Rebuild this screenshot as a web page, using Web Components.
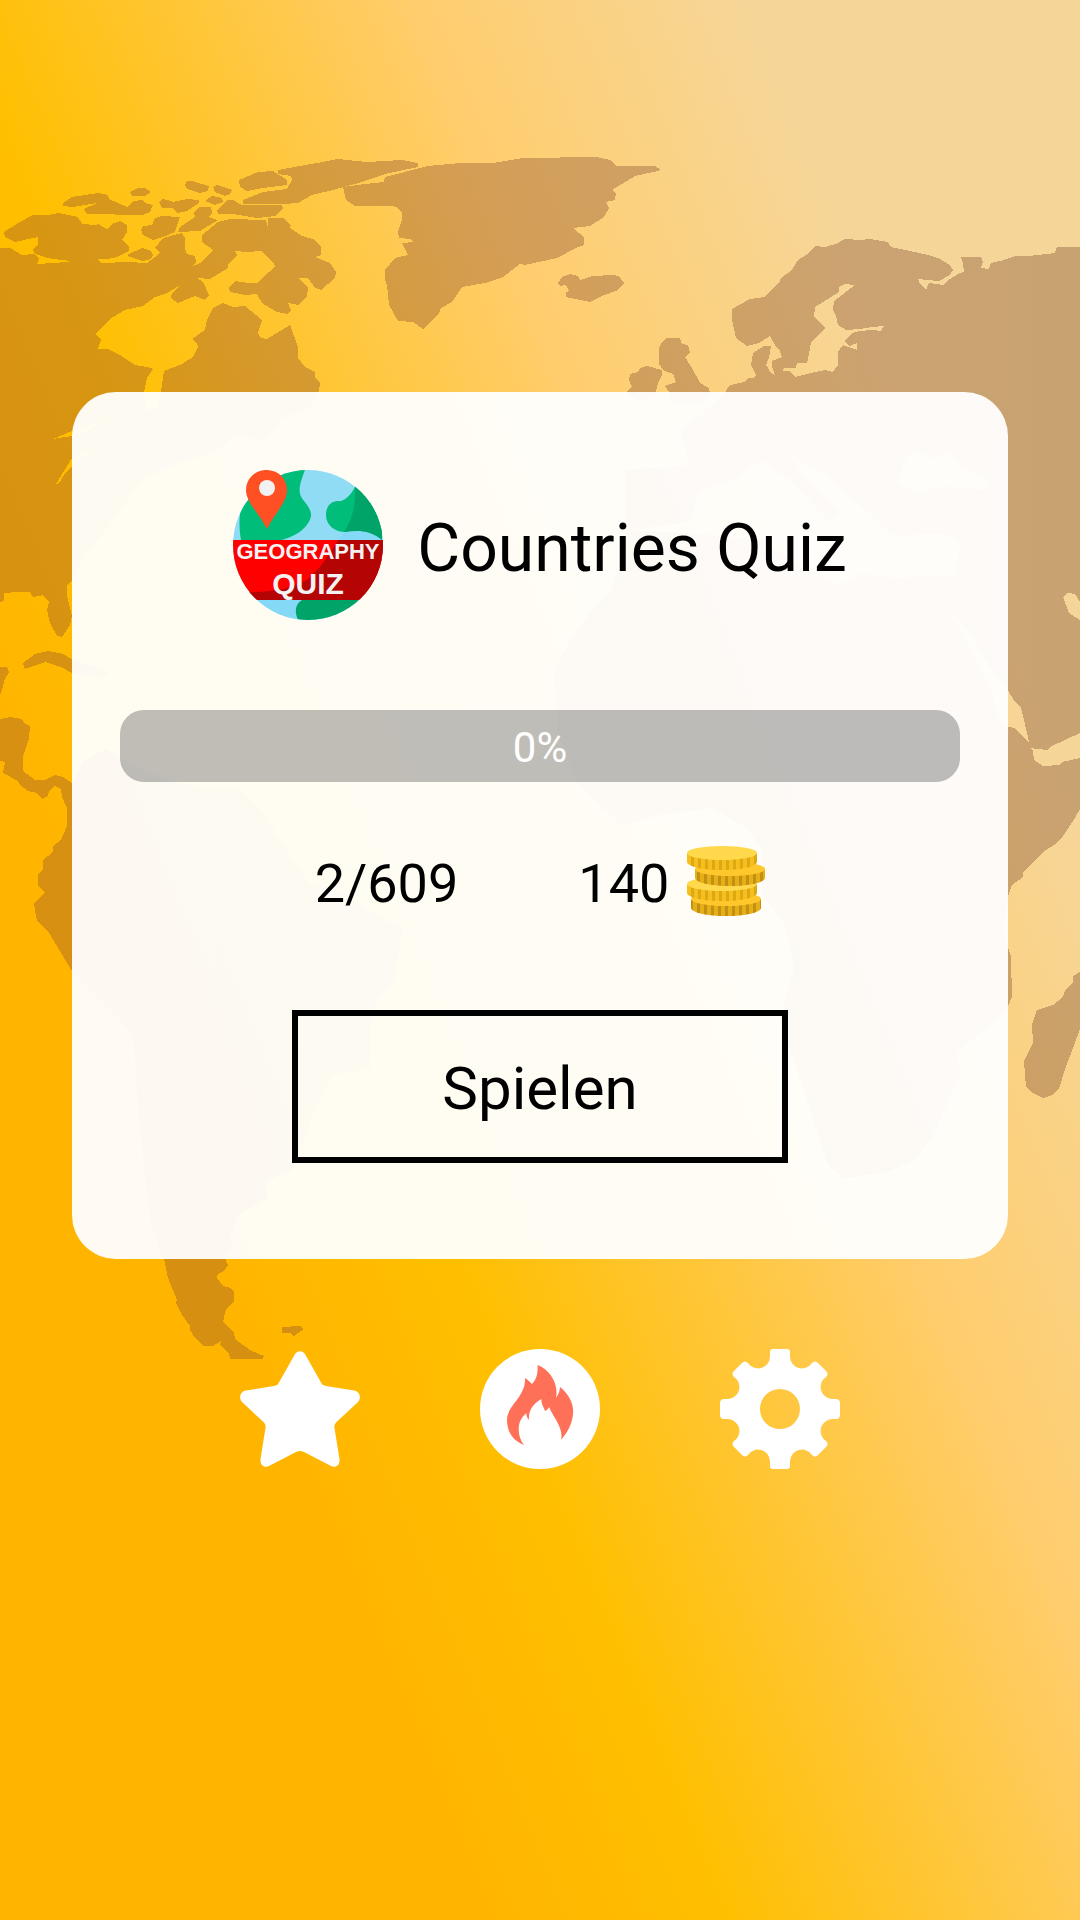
<!DOCTYPE html>
<html lang="de">
<head>
<meta charset="utf-8">
<meta name="viewport" content="width=device-width, initial-scale=1">
<title>Countries Quiz</title>
<style>
  body {
    margin: 0;
    font-family: Roboto, sans-serif;
    color: #000;
    background: #ffb500;
  }
</style>
</head>
<body>

<quiz-screen>
  <world-map slot="background"></world-map>
  <quiz-card>
    <quiz-logo slot="logo"></quiz-logo>
    <span slot="title">Countries Quiz</span>
    <quiz-progress slot="progress" data-value="0"></quiz-progress>
    <span slot="stats">2/609</span>
    <coin-balance slot="coins">140</coin-balance>
    <play-button slot="action">Spielen</play-button>
  </quiz-card>
  <icon-button slot="actions" data-icon="star" data-label="Bewerten"></icon-button>
  <icon-button slot="actions" data-icon="fire" data-label="Beliebt"></icon-button>
  <icon-button slot="actions" data-icon="gear" data-label="Einstellungen"></icon-button>
</quiz-screen>

<script>
class BaseElement extends HTMLElement {
  constructor() {
    super();
    this.dom = this.attachShadow({ mode: "open" });
  }

  connectedCallback() {
    const template = document.createElement("template");
    template.innerHTML = this.markup();
    this.dom.replaceChildren(document.importNode(template.content, true));
  }
}

/* Page frame: gradient, background slot, card, row of actions */
class QuizScreen extends BaseElement {
  markup() {
    return `
      <style>
        :host {
          display: block;
          position: relative;
          min-height: 100vh;
          overflow: hidden;
          background: linear-gradient(68deg, #ffb500 0%, #ffb500 26%, #ffbf00 39%, #ffcd6d 64%, #f6d698 82%, #f6d698 100%);
        }
        main {
          position: relative;
          padding: 392px 72px 72px;
        }
        nav {
          display: flex;
          justify-content: center;
          gap: 120px;
          margin-top: 90px;
        }
      </style>
      <slot name="background"></slot>
      <main>
        <slot></slot>
        <nav><slot name="actions"></slot></nav>
      </main>
    `;
  }
}

class WorldMap extends BaseElement {
  markup() {
    return `
      <style>
        :host {
          display: block;
          position: absolute;
          inset: 0;
        }
        svg {
          display: block;
          width: 100%;
          height: 100%;
          fill: url(#land);
          fill-opacity: 0.37;
          fill-rule: evenodd;
        }
      </style>
      <svg viewBox="0 0 1080 1920" preserveAspectRatio="xMidYMin slice" shape-rendering="crispEdges" aria-hidden="true">
        <defs>
          <linearGradient id="land" gradientUnits="userSpaceOnUse" x1="0" y1="0" x2="1080" y2="0">
            <stop offset="0" stop-color="#94502f"/>
            <stop offset="1" stop-color="#7c4a31"/>
          </linearGradient>
        </defs>
        <!-- North America -->
        <path d="M0 248L10 248 22 255 34 254 39 259 37 264 68 262 70 261 47 258 35 254 33 250 38 244 38 237 15 242 5 237 4 232 18 223 33 215 48 215 58 213 78 217 82 224 95 225 98 224 107 229 114 223 120 221 127 225 127 232 122 240 129 246 129 251 117 257 107 259 97 259 102 263 127 262 147 263 155 257 160 253 155 248 163 238 182 233 185 238 185 248 187 254 195 256 196 262 191 267 200 263 213 250 202 242 202 235 218 222 230 219 266 220 268 228 268 218 283 218 291 225 290 228 302 236 313 239 321 247 321 255 315 257 330 263 336 272 335 278 321 290 315 288 308 278 298 278 308 287 307 297 298 305 288 303 291 310 288 314 277 312 262 303 257 294 245 295 230 292 229 287 235 281 248 283 258 283 262 278 275 267 274 263 267 257 261 251 247 252 235 251 237 255 228 265 228 268 210 279 197 278 203 282 209 295 205 300 195 296 178 303 171 298 172 293 179 286 167 293 155 297 143 306 125 310 110 319 95 334 101 340 98 349 108 349 120 355 135 365 147 367 153 369 147 378 144 392 146 410 158 408 161 392 164 371 182 364 193 357 198 347 197 343 192 339 205 330 207 320 213 308 223 303 233 307 245 306 262 320 258 333 261 338 267 339 290 325 298 347 298 358 305 367 315 372 315 377 320 383 319 392 312 405 280 420 265 440 235 436 215 452 180 462 140 482 110 525 85 555 72 581 67 585 67 596 72 616 70 625 62 637 57 636 50 623 47 610 49 602 43 595 33 597 30 592 17 592 4 593 4 601 0 602ZM53 439L72 431 110 420 72 436ZM56 484L72 458 90 450 66 472 59 483Z"/>
        <!-- Arctic islands -->
        <path d="M63 203L72 197 98 193 108 195 109 199 127 207 133 201 143 200 145 203 153 205 150 212 143 215 87 214 84 209 97 203 73 207 63 206Z"/>
        <path d="M130 192L138 188 145 188 151 192 145 196 132 196ZM159 202L162 199 168 200 173 202 187 199 199 200 199 203 187 211 178 213 172 208 162 208ZM185 185L187 181 192 181 209 186 208 191 200 193 187 189ZM213 187L217 185 232 190 230 194 225 196 215 192ZM205 201L212 196 222 198 223 202 215 205ZM239 180L258 172 273 171 287 180 287 185 263 188 247 191 240 187Z"/>
        <path d="M278 170L300 166 317 163 338 159 367 162 402 160 418 163 418 167 385 174 355 184 333 190 312 195 298 203 283 204 243 204 243 200 263 192 287 189 292 180 291 176 278 174Z"/>
        <path d="M217 210L227 200 233 200 242 205 282 205 283 208 275 216 257 218 233 214 218 214ZM141 230L143 226 152 225 155 218 162 216 180 217 175 232 163 237 153 240 143 235ZM194 212L200 207 211 207 212 213 208 217 218 220 200 231 178 232 180 227 195 217ZM127 255L142 248 151 251 153 255 151 259 143 261 130 257Z"/>
        <!-- Greenland and Iceland -->
        <path d="M343 187L365 184 384 182 385 177 428 166 460 163 493 163 523 158 597 157 610 160 616 166 655 166 660 169 658 171 635 176 612 190 616 193 615 200 606 202 609 208 604 217 590 226 573 228 584 237 584 245 576 248 557 258 525 265 520 264 503 277 485 283 462 287 452 302 441 308 439 313 423 329 413 322 398 321 389 305 387 285 385 280 385 270 395 258 408 255 402 243 413 242 410 239 399 238 398 232 402 220 402 213 397 207 390 206 355 206 346 200Z"/>
        <path d="M558 283L562 277 570 274 578 276 580 280 592 276 613 275 619 276 624 283 618 290 602 296 590 302 566 297 566 292 569 291 566 285 560 286Z"/>
        <!-- Caribbean and South America -->
        <path d="M23 663L35 654 48 651 63 654 72 659 110 672 102 678 72 673 63 668 45 662 25 669ZM0 667L7 667 9 672 4 681 3 687 0 696Z"/>
        <path d="M0 719L10 717 22 719 24 723 30 726 29 739 23 757 23 771 35 780 45 780 55 775 63 777 72 783 84 760 106 749 140 768 178 783 214 788 240 790 262 811 280 839 310 884 340 890 370 912 403 929 394 979 372 1010 370 1069 334 1075 316 1108 292 1170 265 1181 268 1198 238 1215 230 1238 232 1248 225 1258 228 1265 225 1270 217 1275 217 1278 223 1286 231 1288 234 1292 234 1301 226 1309 223 1322 234 1333 235 1339 250 1350 264 1356 263 1359 230 1359 229 1353 220 1345 221 1341 213 1346 203 1346 195 1338 190 1330 190 1326 182 1315 176 1303 177 1300 168 1278 164 1259 152 1230 148 1204 139 1119 133 1035 110 1010 72 971 48 931 37 921 34 904 45 892 38 886 38 874 43 869 43 860 53 852 53 846 61 840 67 826 67 808 62 797 61 789 55 786 49 791 48 796 42 799 37 793 28 791 20 785 18 781 3 773 5 762 0 761Z"/>
        <path d="M282 1327L300 1326 304 1329 298 1333 294 1336 290 1333 282 1333Z"/>
        <!-- British Isles -->
        <path d="M659 348L662 342 666 338 680 338 682 344 688 345 690 353 685 357 692 368 700 383 709 388 710 394 700 403 672 405 669 392 665 386 676 382 673 374 664 371 659 364ZM626 392L632 387 629 380 630 374 638 372 640 368 647 366 662 370 662 375 658 383 655 395 640 401Z"/>
        <!-- Eurasia and Africa -->
        <path d="M726 392L727 388 731 385 744 382 748 378 753 378 756 375 751 365 753 353 764 346 771 346 769 358 766 365 771 373 775 375 772 367 772 361 782 357 780 351 776 347 770 336 759 343 747 346 736 338 732 320 732 309 750 299 764 297 779 283 781 278 792 270 798 260 806 255 815 246 825 247 836 244 845 239 860 240 870 239 888 242 891 247 910 251 928 255 938 258 950 265 953 270 950 275 939 281 927 280 918 279 920 284 926 290 929 283 944 285 948 280 960 273 964 272 963 263 961 257 981 257 983 262 981 268 989 269 991 263 1004 260 1015 256 1029 256 1055 253 1057 247 1080 247 1080 809 1075 818 1063 836 1057 843 1043 852 1023 872 1023 877 1012 885 1008 896 1003 930 1011 957 1012 997 1005 1013 957 1052 960 1075 933 1136 915 1160 885 1173 843 1178 828 1165 813 1119 780 1018 794 968 785 925 762 895 762 850 747 828 711 808 660 815 622 825 605 810 577 783 558 735 554 670 572 637 589 614 611 590 620 565 625 540 625 470 690 465 680 430 700 416ZM855 285L845 284 839 287 839 292 815 307 814 317 825 328 811 342 809 354 807 363 797 363 796 368 784 368 783 371 789 371 795 377 815 372 825 370 833 372 838 365 838 352 843 345 857 350 857 343 850 346 844 341 852 333 860 331 872 330 881 331 884 326 872 327 860 329 846 330 838 325 836 316 833 310 834 301ZM630 530L690 522 700 490 735 480 760 460 790 480 830 522 838 512 800 470 790 455 825 475 865 510 890 535 945 534 960 545 955 575 900 578 860 574 840 585 800 565 760 540 700 534ZM897 484L905 460 915 449 930 458 950 452 960 468 990 480 985 490 945 486 915 492ZM1063 597L1068 593 1075 594 1080 602 1080 620 1069 613ZM951 612L969 632 985 660 1008 690 1014 701 1021 708 1024 720 1029 742 1025 739 1015 728 1008 727 999 717 990 687 970 650ZM1030 748L1047 750 1052 746 1065 740 1080 733 1080 758 1062 762 1060 765 1043 766 1034 760 1033 751Z"/>
        <path d="M1080 972L1073 976 1073 983 1065 990 1063 997 1053 1005 1037 1010 1032 1024 1033 1043 1024 1061 1026 1087 1033 1093 1043 1098 1052 1095 1059 1089 1065 1069 1073 1048 1080 1029Z"/>
      </svg>
    `;
  }
}

class QuizCard extends BaseElement {
  markup() {
    return `
      <style>
        :host {
          display: flex;
          flex-direction: column;
          align-items: center;
          padding: 78px 48px 96px;
          border-radius: 44px;
          background: rgba(255, 255, 255, 0.95);
        }
        header {
          display: flex;
          align-items: center;
          gap: 34px;
        }
        h1 {
          margin: 0;
          padding-top: 8px;
          font-size: 66px;
          line-height: 78px;
          font-weight: 400;
        }
        .progress {
          align-self: stretch;
          margin: 90px 0 60px;
        }
        .stats {
          display: flex;
          align-items: center;
          gap: 120px;
          height: 78px;
          margin-bottom: 90px;
          font-size: 54px;
        }
        .level { padding-top: 4px; }
      </style>
      <header>
        <slot name="logo"></slot>
        <h1><slot name="title"></slot></h1>
      </header>
      <div class="progress"><slot name="progress"></slot></div>
      <div class="stats">
        <div class="level"><slot name="stats"></slot></div>
        <slot name="coins"></slot>
      </div>
      <slot name="action"></slot>
    `;
  }
}

class QuizLogo extends BaseElement {
  markup() {
    return `
      <style>
        :host { display: block; }
        svg { display: block; width: 150px; height: 150px; }
        text {
          font-family: "Liberation Sans", Arial, sans-serif;
          font-weight: 700;
          fill: #f2f2f2;
          text-anchor: middle;
        }
      </style>
      <svg viewBox="0 0 150 150" role="img" aria-label="Geography Quiz">
        <defs>
          <clipPath id="globe"><circle cx="75" cy="75" r="75"/></clipPath>
          <clipPath id="shade"><path d="M122 17C123 36 119 54 105 70C96 86 86 100 74 110C58 119 40 122 15 122V150H150V0Z"/></clipPath>
        </defs>
        <g clip-path="url(#globe)">
          <path fill="#90dcf5" d="M0 0H150V150H0Z"/>
          <path fill="#00bd7a" d="M72 0C65 18 65 24 71 31C80 42 80 47 73 56C67 63 59 67 49 70H8C6 60 6 45 8 40L20 0Z"/>
          <path fill="#00bd7a" d="M122 17C116 28 110 32 104 31C97 32 93 37 93 45C93 56 103 62 112 62C124 60 138 60 149 70L150 17Z"/>
          <path fill="#f00" d="M0 70H150V130H0Z"/>
          <path fill="#84d9f6" d="M0 130H150V150H0Z"/>
          <g clip-path="url(#shade)">
            <path fill="#84d9f6" d="M105 62L112 62C124 60 138 60 149 70H105Z"/>
            <path fill="#00a468" d="M122 17C116 28 110 32 104 31C97 32 93 37 93 45C93 56 103 62 112 62C124 60 138 60 149 70L150 17Z"/>
            <path fill="#b40404" d="M0 70H150V130H0Z"/>
            <path fill="#00a468" d="M69 130C61 135 62 143 65 150H150V130Z"/>
          </g>
        </g>
        <path fill="#ff5023" d="M34 0A20 20 0 0 1 54 20C54 33 41 44 34 59C27 44 13 33 13 20A20 20 0 0 1 34 0Z"/>
        <circle cx="34" cy="18" r="8" fill="#f2f2f2"/>
        <text x="75" y="89" font-size="22">GEOGRAPHY</text>
        <text x="75" y="124" font-size="30">QUIZ</text>
      </svg>
    `;
  }
}

class QuizProgress extends BaseElement {
  markup() {
    const value = Number(this.getAttribute("data-value")) || 0;
    return `
      <style>
        :host { display: block; }
        .bar {
          display: grid;
          height: 72px;
          border-radius: 24px;
          overflow: hidden;
          background: rgba(0, 0, 0, 0.25);
          color: #fff;
          font-size: 42px;
          line-height: 76px;
          text-align: center;
        }
        .bar > * { grid-area: 1 / 1; }
        .fill { width: ${value}%; background: #ffb500; }
      </style>
      <div class="bar" role="progressbar" aria-valuemin="0" aria-valuemax="100" aria-valuenow="${value}">
        <div class="fill"></div>
        <span>${value}%</span>
      </div>
    `;
  }
}

class CoinBalance extends BaseElement {
  // one coin: striped rim below a flat ellipse
  coin(x, y, name, top) {
    const rim = `M${x} ${y}V${y + 9}A35 8 0 0 0 ${x + 70} ${y + 9}V${y}Z`;
    return `
      <path d="${rim}" fill="url(#${name})"/>
      <ellipse cx="${x + 35}" cy="${y}" rx="35" ry="7" fill="${top}"/>
    `;
  }

  markup() {
    return `
      <style>
        :host {
          display: flex;
          align-items: center;
          gap: 18px;
        }
        span { padding-top: 4px; }
        svg { display: block; width: 78px; height: 70px; }
      </style>
      <span><slot></slot></span>
      <svg viewBox="0 0 78 70" aria-hidden="true">
        <defs>
          <pattern id="light" width="7" height="70" patternUnits="userSpaceOnUse">
            <path fill="#f5bf1c" d="M0 0H7V70H0Z"/><path fill="#dda716" d="M4 0H7V70H4Z"/>
          </pattern>
          <pattern id="dark" width="7" height="70" patternUnits="userSpaceOnUse">
            <path fill="#e6af18" d="M0 0H7V70H0Z"/><path fill="#c29112" d="M3 0H6V70H3Z"/>
          </pattern>
        </defs>
        ${this.coin(4, 53, "dark", "#ffc72c")}
        ${this.coin(0, 38, "light", "#ffd84c")}
        ${this.coin(8, 23, "dark", "#ffc72c")}
        ${this.coin(0, 7, "light", "#ffd84c")}
      </svg>
    `;
  }
}

class PlayButton extends BaseElement {
  markup() {
    return `
      <style>
        :host { display: block; }
        button {
          display: block;
          min-width: 496px;
          padding: 38px 48px 34px;
          border: 6px solid #000;
          background: transparent;
          color: inherit;
          font: inherit;
          font-size: 60px;
          line-height: 69px;
          cursor: pointer;
        }
      </style>
      <button type="button"><slot></slot></button>
    `;
  }
}

const icons = {
  star: `<path d="M54.500 6C57 1 63 1 65.500 6L80.500 32.500Q82 36.500 86 37L114 41.500C120 42.500 121.500 49 118 53L96 73.500Q94 76 94.500 79L99.500 110C100 116 96 119.500 91 117L64 103Q60 101 56 103L29 117C24 119.500 20 116 20.500 110L25.500 79Q26 76 24 73.500L2 53C-1.500 49 0 42.500 6 41.500L34 37Q38 36.500 39.500 32.500Z"/>`,
  fire: `
    <circle cx="60" cy="60" r="60"/>
    <path fill="#ff7058" d="M57.600 16C69 20 79 34 76 49C78 46 80 42 80 38C90 46 94 56 93 65C92 76 87 84 81 91C84 79 73 68 69 58C68 60 67 61 65 62C64 58 61 56 61.500 50C54 54 48 61 49 71C47 69 46 66 46.500 64C36 72 37 87 44 96C32 91 27 82 27 71C27 56 46 48 45 29C48 31 50 33 52 35C57 30 58 23 57.600 16Z"/>
  `,
  gear: `<path fill-rule="evenodd" d="M53 0H67Q70 0 70 3V8A12 12 0 0 0 92 14Q95 11 98 14L106 22Q109 25 106 28A12 12 0 0 0 112 50H117Q120 51 120 54V66Q120 69 117 70H112A12 12 0 0 0 106 92Q109 95 106 98L98 106Q95 109 92 106A12 12 0 0 0 70 112V117Q70 120 67 120H53Q50 120 50 117V112A12 12 0 0 0 28 106Q25 109 22 106L14 98Q11 95 14 92A12 12 0 0 0 8 70H3Q0 69 0 66V54Q0 51 3 50H8A12 12 0 0 0 14 28Q11 25 14 22L22 14Q25 11 28 14A12 12 0 0 0 50 8V3Q50 0 53 0ZM60 40A20 20 0 0 0 60 80A20 20 0 0 0 60 40Z"/>`
};

class IconButton extends BaseElement {
  markup() {
    return `
      <style>
        :host { display: block; }
        button {
          display: block;
          padding: 0;
          border: 0;
          background: transparent;
          cursor: pointer;
        }
        svg { display: block; width: 120px; height: 120px; fill: #fff; }
      </style>
      <button type="button" aria-label="${this.getAttribute("data-label")}">
        <svg viewBox="0 0 120 120" aria-hidden="true">${icons[this.getAttribute("data-icon")]}</svg>
      </button>
    `;
  }
}

customElements.define("quiz-screen", QuizScreen);
customElements.define("world-map", WorldMap);
customElements.define("quiz-card", QuizCard);
customElements.define("quiz-logo", QuizLogo);
customElements.define("quiz-progress", QuizProgress);
customElements.define("coin-balance", CoinBalance);
customElements.define("play-button", PlayButton);
customElements.define("icon-button", IconButton);
</script>
</body>
</html>
